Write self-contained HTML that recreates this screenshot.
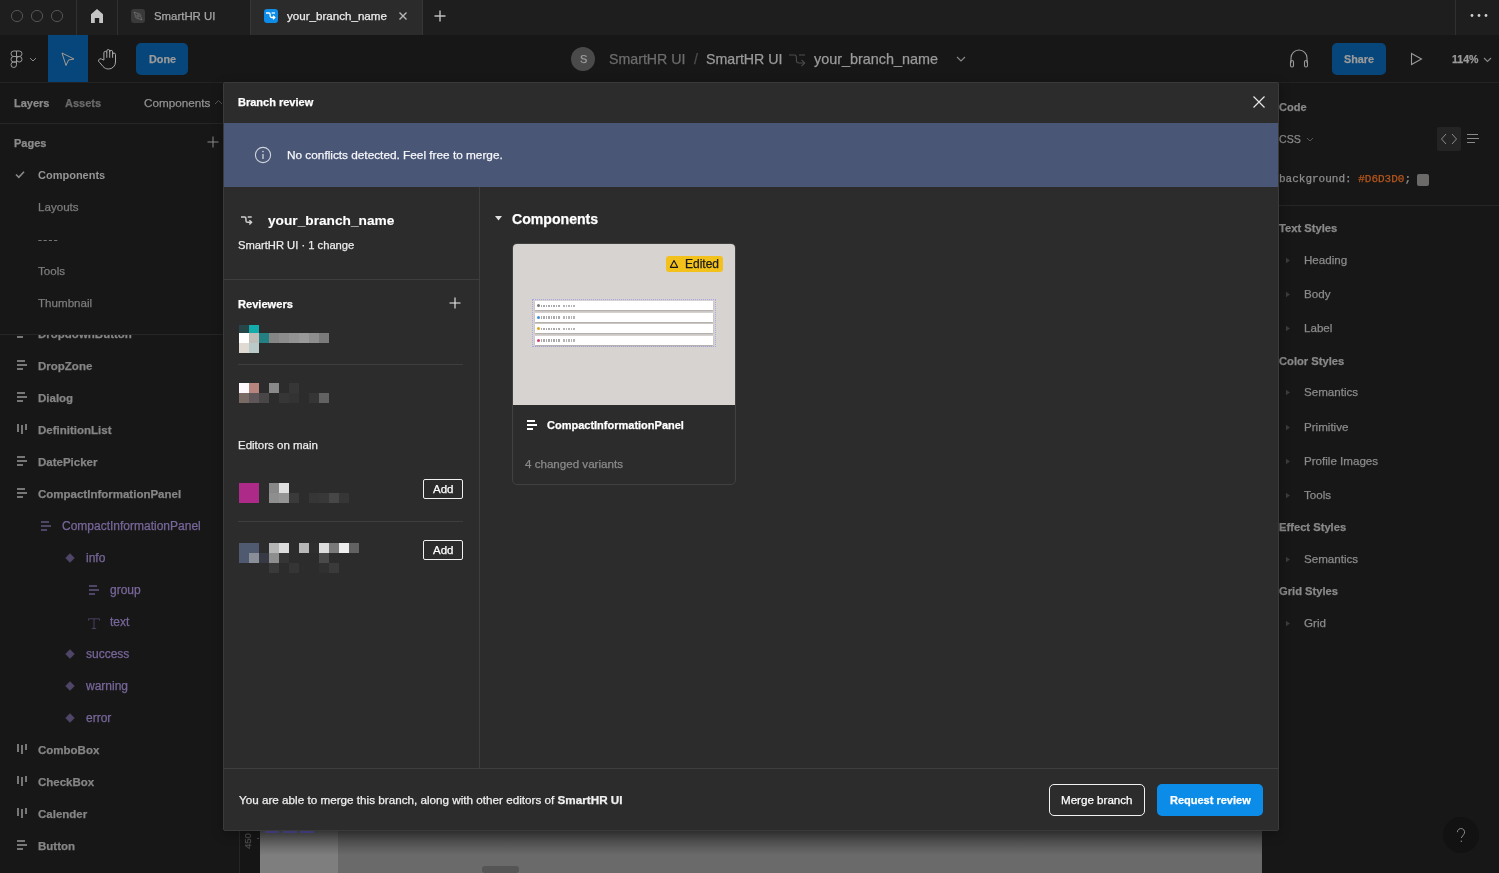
<!DOCTYPE html><html><head><meta charset="utf-8"><style>
html,body{margin:0;padding:0;width:1499px;height:873px;overflow:hidden;background:#171717;font-family:"Liberation Sans",sans-serif}
.t{position:absolute;white-space:nowrap;will-change:transform;-webkit-text-stroke:0.25px currentColor}
.r{position:absolute;display:block}
</style></head><body>

<div class="r" style="left:0px;top:0px;width:1499px;height:35px;background:#1e1e1e;"></div>
<svg class="r" style="left:10px;top:9px;" width="14" height="14" viewBox="0 0 14 14"><circle cx="7" cy="7" r="5.6" fill="none" stroke="#545454" stroke-width="1"/></svg>
<svg class="r" style="left:30px;top:9px;" width="14" height="14" viewBox="0 0 14 14"><circle cx="7" cy="7" r="5.6" fill="none" stroke="#545454" stroke-width="1"/></svg>
<svg class="r" style="left:50px;top:9px;" width="14" height="14" viewBox="0 0 14 14"><circle cx="7" cy="7" r="5.6" fill="none" stroke="#545454" stroke-width="1"/></svg>
<div class="r" style="left:76px;top:0px;width:1px;height:35px;background:#303030;"></div>
<div class="r" style="left:117px;top:0px;width:1px;height:35px;background:#303030;"></div>
<svg class="r" style="left:90px;top:9px;" width="14" height="15" viewBox="0 0 14 15"><path d="M1 5.3 L7 0 L13 5.3 V14 H9.2 V9 H4.8 V14 H1 Z" fill="#c4c4c4"/></svg>
<div class="r" style="left:131px;top:9px;width:14px;height:14px;background:#3a3a3a;border-radius:3px"></div>
<svg class="r" style="left:131px;top:9px;" width="14" height="14" viewBox="0 0 14 14"><g fill="none" stroke="#6e6e6e" stroke-width="0.9"><path d="M3 3 L6.2 4.3 A3 3 0 0 1 9.7 7.8 L11 11 L7.8 9.7 A3 3 0 0 1 4.3 6.2 Z"/><circle cx="7" cy="7" r="1.2"/></g></svg>
<div class="t " style="left:154px;top:9.05px;font-size:11.4px;line-height:14px;font-weight:400;color:#a6a6a6;">SmartHR UI</div>
<div class="r" style="left:250px;top:0px;width:173px;height:35px;background:#2b2b2b;"></div>
<div class="r" style="left:250px;top:0px;width:1px;height:35px;background:#363636;"></div>
<div class="r" style="left:422px;top:0px;width:1px;height:35px;background:#363636;"></div>
<div class="r" style="left:264px;top:9px;width:14px;height:14px;background:#0d8ce9;border-radius:3px"></div>
<svg class="r" style="left:264px;top:10.8px" width="14" height="11" viewBox="0 0 14 11"><g transform="translate(2,2) scale(0.56)" fill="none" stroke="#ffffff" stroke-width="2.32" stroke-linecap="butt"><path d="M0 0 H5.4 Q7.4 0 7.4 2.5 V5.5 Q7.4 8 10 8 H15.6"/><path d="M12.5 4.8 L15.7 8 L12.5 11.2"/><path d="M10 0 H16"/></g></svg>
<div class="t " style="left:287px;top:8.98px;font-size:11.6px;line-height:14px;font-weight:400;color:#ececec;">your_branch_name</div>
<svg class="r" style="left:398px;top:11px;" width="10" height="10" viewBox="0 0 10 10"><path d="M1.5 1.5 L8.5 8.5 M8.5 1.5 L1.5 8.5" stroke="#b8b8b8" stroke-width="1.4"/></svg>
<svg class="r" style="left:434px;top:10px;" width="12" height="12" viewBox="0 0 12 12"><path d="M6 0.5 V11.5 M0.5 6 H11.5" stroke="#c0c0c0" stroke-width="1.4"/></svg>
<div class="r" style="left:1455px;top:0px;width:1px;height:35px;background:#303030;"></div>
<svg class="r" style="left:1470px;top:13px;" width="18" height="5" viewBox="0 0 18 5"><circle cx="2" cy="2.5" r="1.4" fill="#cfcfcf"/><circle cx="9" cy="2.5" r="1.4" fill="#cfcfcf"/><circle cx="16" cy="2.5" r="1.4" fill="#cfcfcf"/></svg>
<div class="r" style="left:0px;top:35px;width:1499px;height:47px;background:#171717;"></div>
<div class="r" style="left:0px;top:82px;width:1499px;height:1px;background:#232323;"></div>
<svg class="r" style="left:10px;top:50px;" width="13" height="19" viewBox="0 0 13 19"><g fill="none" stroke="#9a9a9a" stroke-width="1" transform="translate(1,1)"><path d="M5.5 0 H2.75 A2.75 2.75 0 0 0 2.75 5.5 H5.5 Z"/><path d="M5.5 0 H8.25 A2.75 2.75 0 0 1 8.25 5.5 H5.5 Z"/><path d="M5.5 5.5 H2.75 A2.75 2.75 0 0 0 2.75 11 H5.5 Z"/><circle cx="8.25" cy="8.25" r="2.75"/><path d="M5.5 11 H2.75 A2.75 2.75 0 1 0 5.5 13.75 Z"/></g></svg>
<svg class="r" style="left:29px;top:57px;" width="8" height="5" viewBox="0 0 8 5"><path d="M1 1 L4 4 L7 1" fill="none" stroke="#8a8a8a" stroke-width="1"/></svg>
<div class="r" style="left:48px;top:35px;width:40px;height:47px;background:#07467a;"></div>
<svg class="r" style="left:59px;top:50px;" width="18" height="18" viewBox="0 0 18 18"><path d="M3 3 L15 9 L9.5 10 L7 15.5 Z" fill="none" stroke="#a49c92" stroke-width="1"/></svg>
<svg class="r" style="left:97px;top:46px;" width="24" height="26" viewBox="0 0 24 26"><path d="M6.90 14.00 V6.80 A1.45 1.45 0 0 1 9.80 6.80 V5.00 A1.45 1.45 0 0 1 12.70 5.00 V5.80 A1.45 1.45 0 0 1 15.60 5.80 V8.50 A1.45 1.45 0 0 1 18.50 8.50 V16.00 A7 7 0 0 1 11.50 23.00 C9.00 23.00 7.50 22.00 6.00 20.50 L2.80 16.60 A1.7 1.7 0 0 1 4.30 12.90 L6.90 14.20 M9.80 6.80 V11.80 M12.70 5.00 V11.80 M15.60 5.80 V11.80" fill="none" stroke="#a8a8a8" stroke-width="1"/></svg>
<div class="r" style="left:136px;top:43px;width:52px;height:32px;background:#07467a;border-radius:5px"></div>
<div class="t " style="left:149px;top:52.26px;font-size:10.8px;line-height:14px;font-weight:700;color:#9a9a9a;">Done</div>
<div class="r" style="left:571px;top:47px;width:24px;height:24px;background:#4a4a4a;border-radius:50%"></div>
<div class="t " style="left:579.5px;top:52.19px;font-size:11px;line-height:14px;font-weight:400;color:#9c9c9c;">S</div>
<div class="t " style="left:609px;top:50.08px;font-size:14.2px;line-height:18px;font-weight:400;color:#6c6c6c;">SmartHR UI</div>
<div class="t " style="left:694px;top:50.15px;font-size:14px;line-height:18px;font-weight:400;color:#4e4e4e;">/</div>
<div class="t " style="left:706px;top:50.08px;font-size:14.2px;line-height:18px;font-weight:400;color:#9a9a9a;">SmartHR UI</div>
<svg class="r" style="left:787px;top:52.5px" width="22" height="18" viewBox="0 0 22 18"><g transform="translate(2,2) scale(1.0)" fill="none" stroke="#4c4c4c" stroke-width="1.10" stroke-linecap="butt"><path d="M0 0 H5.4 Q7.4 0 7.4 2.5 V5.5 Q7.4 8 10 8 H15.6"/><path d="M12.5 4.8 L15.7 8 L12.5 11.2"/><path d="M10 0 H16"/></g></svg>
<div class="t " style="left:814px;top:50.01px;font-size:14.4px;line-height:18px;font-weight:400;color:#9a9a9a;">your_branch_name</div>
<svg class="r" style="left:956px;top:56px;" width="10" height="6" viewBox="0 0 10 6"><path d="M1 1 L5 5 L9 1" fill="none" stroke="#8a8a8a" stroke-width="1.1"/></svg>
<svg class="r" style="left:1288px;top:48px;" width="22" height="22" viewBox="0 0 22 22"><g fill="none" stroke="#9a9a9a" stroke-width="1.1"><path d="M3 15 V10 A8 8 0 0 1 19 10 V15"/><rect x="2.5" y="12.5" width="3" height="6.5" rx="1.5"/><rect x="16.5" y="12.5" width="3" height="6.5" rx="1.5"/></g></svg>
<div class="r" style="left:1332px;top:43px;width:54px;height:32px;background:#07467a;border-radius:5px"></div>
<div class="t " style="left:1344px;top:52.26px;font-size:10.8px;line-height:14px;font-weight:700;color:#9a9a9a;">Share</div>
<svg class="r" style="left:1410px;top:52px;" width="13" height="14" viewBox="0 0 13 14"><path d="M1.5 1.5 L11.5 7 L1.5 12.5 Z" fill="none" stroke="#9a9a9a" stroke-width="1.1"/></svg>
<div class="t " style="left:1452px;top:52.83px;font-size:10.6px;line-height:13px;font-weight:700;color:#9a9a9a;">114%</div>
<svg class="r" style="left:1483px;top:57px;" width="9" height="6" viewBox="0 0 9 6"><path d="M1 1 L4.5 4.5 L8 1" fill="none" stroke="#8a8a8a" stroke-width="1.1"/></svg>
<div class="r" style="left:0px;top:83px;width:239px;height:790px;background:#171717;"></div>
<div class="r" style="left:239px;top:83px;width:1px;height:790px;background:#262626;"></div>
<div class="t " style="left:14px;top:96.19px;font-size:11px;line-height:14px;font-weight:700;color:#8b8b8b;">Layers</div>
<div class="t " style="left:65px;top:96.19px;font-size:11px;line-height:14px;font-weight:700;color:#6a6a6a;">Assets</div>
<div class="t " style="left:144px;top:95.45px;font-size:11.7px;line-height:15px;font-weight:400;color:#929292;">Components</div>
<svg class="r" style="left:214px;top:99px;" width="9" height="6" viewBox="0 0 9 6"><path d="M1 5 L4.5 1.5 L8 5" fill="none" stroke="#555" stroke-width="1"/></svg>
<div class="r" style="left:0px;top:123px;width:239px;height:1px;background:#262626;"></div>
<div class="t " style="left:14px;top:136.19px;font-size:11px;line-height:14px;font-weight:700;color:#8b8b8b;">Pages</div>
<svg class="r" style="left:207px;top:136px;" width="12" height="12" viewBox="0 0 12 12"><path d="M6 0.5 V11.5 M0.5 6 H11.5" stroke="#8a8a8a" stroke-width="1"/></svg>
<svg class="r" style="left:15px;top:170px;" width="10" height="9" viewBox="0 0 10 9"><path d="M1 4.5 L3.8 7.3 L9 1.8" fill="none" stroke="#8a8a8a" stroke-width="1.6"/></svg>
<div class="t " style="left:38px;top:168.39px;font-size:11px;line-height:14px;font-weight:700;color:#959595;-webkit-text-stroke:0">Components</div>
<div class="t " style="left:38px;top:200.18px;font-size:11.6px;line-height:14px;font-weight:400;color:#7c7c7c;">Layouts</div>
<div class="t " style="left:38px;top:232.18px;font-size:11.6px;line-height:14px;font-weight:400;color:#7c7c7c;letter-spacing:1.4px">----</div>
<div class="t " style="left:38px;top:264.18px;font-size:11.6px;line-height:14px;font-weight:400;color:#7c7c7c;">Tools</div>
<div class="t " style="left:38px;top:296.18px;font-size:11.6px;line-height:14px;font-weight:400;color:#7c7c7c;">Thumbnail</div>
<div class="r" style="left:0px;top:334px;width:239px;height:1px;background:#262626;"></div>
<div style="position:absolute;left:0;top:335px;width:239px;height:538px;overflow:hidden">
<div class="r" style="left:17px;top:-6.699999999999989px;width:8px;height:2px;background:#777;"></div>
<div class="r" style="left:17px;top:-2.6999999999999886px;width:10px;height:2px;background:#777;"></div>
<div class="r" style="left:17px;top:1.3000000000000114px;width:6px;height:2px;background:#777;"></div>
<div class="t " style="left:38px;top:-8.18px;font-size:11.5px;line-height:14px;font-weight:700;color:#858585;">DropdownButton</div>
<div class="r" style="left:17px;top:25.30000000000001px;width:8px;height:2px;background:#777;"></div>
<div class="r" style="left:17px;top:29.30000000000001px;width:10px;height:2px;background:#777;"></div>
<div class="r" style="left:17px;top:33.30000000000001px;width:6px;height:2px;background:#777;"></div>
<div class="t " style="left:38px;top:23.82px;font-size:11.5px;line-height:14px;font-weight:700;color:#858585;">DropZone</div>
<div class="r" style="left:17px;top:57.30000000000001px;width:8px;height:2px;background:#777;"></div>
<div class="r" style="left:17px;top:61.30000000000001px;width:10px;height:2px;background:#777;"></div>
<div class="r" style="left:17px;top:65.30000000000001px;width:6px;height:2px;background:#777;"></div>
<div class="t " style="left:38px;top:55.82px;font-size:11.5px;line-height:14px;font-weight:700;color:#858585;">Dialog</div>
<div class="r" style="left:17px;top:89.30000000000001px;width:2px;height:8px;background:#777;"></div>
<div class="r" style="left:21px;top:90.30000000000001px;width:2px;height:9px;background:#777;"></div>
<div class="r" style="left:25px;top:89.30000000000001px;width:2px;height:6px;background:#777;"></div>
<div class="t " style="left:38px;top:87.82px;font-size:11.5px;line-height:14px;font-weight:700;color:#858585;">DefinitionList</div>
<div class="r" style="left:17px;top:121.30000000000001px;width:8px;height:2px;background:#777;"></div>
<div class="r" style="left:17px;top:125.30000000000001px;width:10px;height:2px;background:#777;"></div>
<div class="r" style="left:17px;top:129.3px;width:6px;height:2px;background:#777;"></div>
<div class="t " style="left:38px;top:119.82px;font-size:11.5px;line-height:14px;font-weight:700;color:#858585;">DatePicker</div>
<div class="r" style="left:17px;top:153.3px;width:8px;height:2px;background:#777;"></div>
<div class="r" style="left:17px;top:157.3px;width:10px;height:2px;background:#777;"></div>
<div class="r" style="left:17px;top:161.3px;width:6px;height:2px;background:#777;"></div>
<div class="t " style="left:38px;top:151.82px;font-size:11.5px;line-height:14px;font-weight:700;color:#858585;">CompactInformationPanel</div>
<div class="r" style="left:41px;top:186.29999999999995px;width:8px;height:2px;background:#4f4566;"></div>
<div class="r" style="left:41px;top:190.29999999999995px;width:10px;height:2px;background:#4f4566;"></div>
<div class="r" style="left:41px;top:194.29999999999995px;width:6px;height:2px;background:#4f4566;"></div>
<div class="t " style="left:62px;top:184.34px;font-size:12px;line-height:15px;font-weight:400;color:#77679a;">CompactInformationPanel</div>
<svg class="r" style="left:65px;top:218.29999999999995px" width="10" height="10" viewBox="0 0 10 10"><path d="M5 0.3 L9.7 5 L5 9.7 L0.3 5Z" fill="#4f4566"/></svg>
<div class="t " style="left:86px;top:216.34px;font-size:12px;line-height:15px;font-weight:400;color:#77679a;">info</div>
<div class="r" style="left:89px;top:250.29999999999995px;width:8px;height:2px;background:#4f4566;"></div>
<div class="r" style="left:89px;top:254.29999999999995px;width:10px;height:2px;background:#4f4566;"></div>
<div class="r" style="left:89px;top:258.29999999999995px;width:6px;height:2px;background:#4f4566;"></div>
<div class="t " style="left:110px;top:248.34px;font-size:12px;line-height:15px;font-weight:400;color:#77679a;">group</div>
<svg class="r" style="left:88px;top:282.79999999999995px" width="12" height="12" viewBox="0 0 12 12"><path d="M0.5 2.5 V0.8 H11.5 V2.5 M6 0.8 V10.5 M3.8 10.5 H8.2" fill="none" stroke="#4f4566" stroke-width="0.9"/></svg>
<div class="t " style="left:110px;top:280.34px;font-size:12px;line-height:15px;font-weight:400;color:#77679a;">text</div>
<svg class="r" style="left:65px;top:314.29999999999995px" width="10" height="10" viewBox="0 0 10 10"><path d="M5 0.3 L9.7 5 L5 9.7 L0.3 5Z" fill="#4f4566"/></svg>
<div class="t " style="left:86px;top:312.34px;font-size:12px;line-height:15px;font-weight:400;color:#77679a;">success</div>
<svg class="r" style="left:65px;top:346.29999999999995px" width="10" height="10" viewBox="0 0 10 10"><path d="M5 0.3 L9.7 5 L5 9.7 L0.3 5Z" fill="#4f4566"/></svg>
<div class="t " style="left:86px;top:344.34px;font-size:12px;line-height:15px;font-weight:400;color:#77679a;">warning</div>
<svg class="r" style="left:65px;top:378.29999999999995px" width="10" height="10" viewBox="0 0 10 10"><path d="M5 0.3 L9.7 5 L5 9.7 L0.3 5Z" fill="#4f4566"/></svg>
<div class="t " style="left:86px;top:376.34px;font-size:12px;line-height:15px;font-weight:400;color:#77679a;">error</div>
<div class="r" style="left:17px;top:409.29999999999995px;width:2px;height:8px;background:#777;"></div>
<div class="r" style="left:21px;top:410.29999999999995px;width:2px;height:9px;background:#777;"></div>
<div class="r" style="left:25px;top:409.29999999999995px;width:2px;height:6px;background:#777;"></div>
<div class="t " style="left:38px;top:407.82px;font-size:11.5px;line-height:14px;font-weight:700;color:#858585;">ComboBox</div>
<div class="r" style="left:17px;top:441.29999999999995px;width:2px;height:8px;background:#777;"></div>
<div class="r" style="left:21px;top:442.29999999999995px;width:2px;height:9px;background:#777;"></div>
<div class="r" style="left:25px;top:441.29999999999995px;width:2px;height:6px;background:#777;"></div>
<div class="t " style="left:38px;top:439.82px;font-size:11.5px;line-height:14px;font-weight:700;color:#858585;">CheckBox</div>
<div class="r" style="left:17px;top:473.29999999999995px;width:2px;height:8px;background:#777;"></div>
<div class="r" style="left:21px;top:474.29999999999995px;width:2px;height:9px;background:#777;"></div>
<div class="r" style="left:25px;top:473.29999999999995px;width:2px;height:6px;background:#777;"></div>
<div class="t " style="left:38px;top:471.82px;font-size:11.5px;line-height:14px;font-weight:700;color:#858585;">Calender</div>
<div class="r" style="left:17px;top:505.29999999999995px;width:8px;height:2px;background:#777;"></div>
<div class="r" style="left:17px;top:509.29999999999995px;width:10px;height:2px;background:#777;"></div>
<div class="r" style="left:17px;top:513.3px;width:6px;height:2px;background:#777;"></div>
<div class="t " style="left:38px;top:503.82px;font-size:11.5px;line-height:14px;font-weight:700;color:#858585;">Button</div>
</div>
<div class="r" style="left:1262px;top:83px;width:237px;height:790px;background:#171717;"></div>
<div class="t " style="left:1279px;top:100.19px;font-size:11px;line-height:14px;font-weight:700;color:#898989;">Code</div>
<div class="t " style="left:1279px;top:132.83px;font-size:10.6px;line-height:13px;font-weight:400;color:#8a8a8a;">CSS</div>
<svg class="r" style="left:1306px;top:137px;" width="8" height="5" viewBox="0 0 8 5"><path d="M1 1 L4 4 L7 1" fill="none" stroke="#555" stroke-width="1"/></svg>
<div class="r" style="left:1437px;top:127px;width:24px;height:24px;background:#242424;border-radius:2px"></div>
<svg class="r" style="left:1440px;top:132px;" width="18" height="14" viewBox="0 0 18 14"><path d="M6 2 L1.5 7 L6 12 M12 2 L16.5 7 L12 12" fill="none" stroke="#8a8a8a" stroke-width="1"/></svg>
<svg class="r" style="left:1466px;top:133px;" width="14" height="11" viewBox="0 0 14 11"><path d="M1 1.5 H12 M1 5.5 H13 M1 9.5 H9" stroke="#8a8a8a" stroke-width="1"/></svg>
<div class="t " style="left:1279px;top:172.19px;font-size:11px;line-height:14px;font-weight:400;color:#8d8d8d;font-family:'Liberation Mono',monospace">background: <span style="color:#b5561c">#D6D3D0</span>;</div>
<div class="r" style="left:1417px;top:174px;width:12px;height:12px;background:#6c6a68;border-radius:2px"></div>
<div class="r" style="left:1262px;top:205px;width:237px;height:1px;background:#262626;"></div>
<div class="t " style="left:1279px;top:221.42px;font-size:11.2px;line-height:14px;font-weight:700;color:#898989;">Text Styles</div>
<svg class="r" style="left:1285px;top:257px;" width="6" height="7" viewBox="0 0 6 7"><path d="M1 0.8 L5 3.5 L1 6.2Z" fill="#3c3c3c"/></svg>
<div class="t " style="left:1303.8px;top:253.08px;font-size:11.6px;line-height:14px;font-weight:400;color:#8a8a8a;">Heading</div>
<svg class="r" style="left:1285px;top:291px;" width="6" height="7" viewBox="0 0 6 7"><path d="M1 0.8 L5 3.5 L1 6.2Z" fill="#3c3c3c"/></svg>
<div class="t " style="left:1303.8px;top:287.08px;font-size:11.6px;line-height:14px;font-weight:400;color:#8a8a8a;">Body</div>
<svg class="r" style="left:1285px;top:325px;" width="6" height="7" viewBox="0 0 6 7"><path d="M1 0.8 L5 3.5 L1 6.2Z" fill="#3c3c3c"/></svg>
<div class="t " style="left:1303.8px;top:321.08px;font-size:11.6px;line-height:14px;font-weight:400;color:#8a8a8a;">Label</div>
<div class="t " style="left:1279px;top:353.82px;font-size:11.2px;line-height:14px;font-weight:700;color:#898989;">Color Styles</div>
<svg class="r" style="left:1285px;top:389.3px;" width="6" height="7" viewBox="0 0 6 7"><path d="M1 0.8 L5 3.5 L1 6.2Z" fill="#3c3c3c"/></svg>
<div class="t " style="left:1303.8px;top:385.38px;font-size:11.6px;line-height:14px;font-weight:400;color:#8a8a8a;">Semantics</div>
<svg class="r" style="left:1285px;top:423.5px;" width="6" height="7" viewBox="0 0 6 7"><path d="M1 0.8 L5 3.5 L1 6.2Z" fill="#3c3c3c"/></svg>
<div class="t " style="left:1303.8px;top:419.58px;font-size:11.6px;line-height:14px;font-weight:400;color:#8a8a8a;">Primitive</div>
<svg class="r" style="left:1285px;top:457.7px;" width="6" height="7" viewBox="0 0 6 7"><path d="M1 0.8 L5 3.5 L1 6.2Z" fill="#3c3c3c"/></svg>
<div class="t " style="left:1303.8px;top:453.78px;font-size:11.6px;line-height:14px;font-weight:400;color:#8a8a8a;">Profile Images</div>
<svg class="r" style="left:1285px;top:491.7px;" width="6" height="7" viewBox="0 0 6 7"><path d="M1 0.8 L5 3.5 L1 6.2Z" fill="#3c3c3c"/></svg>
<div class="t " style="left:1303.8px;top:487.78px;font-size:11.6px;line-height:14px;font-weight:400;color:#8a8a8a;">Tools</div>
<div class="t " style="left:1279px;top:519.62px;font-size:11.2px;line-height:14px;font-weight:700;color:#898989;">Effect Styles</div>
<svg class="r" style="left:1285px;top:555.5px;" width="6" height="7" viewBox="0 0 6 7"><path d="M1 0.8 L5 3.5 L1 6.2Z" fill="#3c3c3c"/></svg>
<div class="t " style="left:1303.8px;top:551.58px;font-size:11.6px;line-height:14px;font-weight:400;color:#8a8a8a;">Semantics</div>
<div class="t " style="left:1279px;top:583.82px;font-size:11.2px;line-height:14px;font-weight:700;color:#898989;">Grid Styles</div>
<svg class="r" style="left:1285px;top:619.6px;" width="6" height="7" viewBox="0 0 6 7"><path d="M1 0.8 L5 3.5 L1 6.2Z" fill="#3c3c3c"/></svg>
<div class="t " style="left:1303.8px;top:615.68px;font-size:11.6px;line-height:14px;font-weight:400;color:#8a8a8a;">Grid</div>
<div class="r" style="left:240px;top:83px;width:22px;height:790px;background:#151515;"></div>
<div class="r" style="left:260px;top:83px;width:1002px;height:790px;background:#6a6a6a;"></div>
<div class="r" style="left:260px;top:820px;width:78px;height:53px;background:#7e7e7e;"></div>
<div class="r" style="left:482px;top:866px;width:37px;height:7px;background:#555;border-radius:3px"></div>
<div class="r" style="left:260px;top:831px;width:1002px;height:24px;background:linear-gradient(rgba(20,20,20,0.55), rgba(0,0,0,0));"></div>
<div class="t " style="left:242px;top:848.71px;font-size:9.5px;line-height:12px;font-weight:400;color:#4a4a4a;transform:rotate(-90deg);transform-origin:0 0">450</div>
<div class="r" style="left:257px;top:838px;width:2px;height:1px;background:#444;"></div>
<div class="r" style="left:265px;top:831px;width:14px;height:2px;background:#4b4690;"></div>
<div class="r" style="left:283px;top:831px;width:14px;height:2px;background:#4b4690;"></div>
<div class="r" style="left:300px;top:831px;width:14px;height:2px;background:#4b4690;"></div>
<div class="r" style="left:1443px;top:817px;width:36px;height:36px;background:#121212;border-radius:50%"></div>
<svg class="r" style="left:1454px;top:827px;" width="14" height="18" viewBox="0 0 14 18"><path d="M3.4 5.2 A3.6 3.6 0 1 1 9.6 7.6 L7.2 11" fill="none" stroke="#8a8a8a" stroke-width="1"/><circle cx="7.3" cy="14.2" r="0.75" fill="#8a8a8a"/></svg>
<div style="position:absolute;left:223px;top:82px;width:1056px;height:749px;background:#2c2c2c;box-sizing:border-box;border:1px solid #3a3a3a;border-radius:2px;box-shadow:0 3px 12px rgba(0,0,0,0.3)"></div>
<div class="t " style="left:238px;top:94.89px;font-size:11px;line-height:14px;font-weight:700;color:#ffffff;">Branch review</div>
<svg class="r" style="left:1252px;top:95px;" width="14" height="14" viewBox="0 0 14 14"><path d="M1.5 1.5 L12.5 12.5 M12.5 1.5 L1.5 12.5" stroke="#e6e6e6" stroke-width="1.2"/></svg>
<div class="r" style="left:224px;top:123px;width:1054px;height:64px;background:#4a5676;"></div>
<svg class="r" style="left:254px;top:146px;" width="18" height="18" viewBox="0 0 18 18"><circle cx="9" cy="9" r="7.6" fill="none" stroke="#cfd3dc" stroke-width="1.1"/><path d="M9 8 V13" stroke="#cfd3dc" stroke-width="1.3"/><circle cx="9" cy="5.6" r="0.8" fill="#cfd3dc"/></svg>
<div class="t " style="left:286.5px;top:147.61px;font-size:11.8px;line-height:15px;font-weight:400;color:#f6f7fa;">No conflicts detected. Feel free to merge.</div>
<div class="r" style="left:479px;top:187px;width:1px;height:581px;background:#3e3e3e;"></div>
<svg class="r" style="left:239px;top:214.8px" width="16" height="13" viewBox="0 0 16 13"><g transform="translate(2,2) scale(0.67)" fill="none" stroke="#d0d0d0" stroke-width="2.24" stroke-linecap="butt"><path d="M0 0 H5.4 Q7.4 0 7.4 2.5 V5.5 Q7.4 8 10 8 H15.6"/><path d="M12.5 4.8 L15.7 8 L12.5 11.2"/><path d="M10 0 H16"/></g></svg>
<div class="t " style="left:267.5px;top:212.45px;font-size:13.7px;line-height:17px;font-weight:700;color:#ffffff;-webkit-text-stroke:0.1px #fff">your_branch_name</div>
<div class="t " style="left:238.4px;top:238.02px;font-size:11.2px;line-height:14px;font-weight:400;color:#ececec;">SmartHR UI · 1 change</div>
<div class="r" style="left:224px;top:279px;width:255px;height:1px;background:#3e3e3e;"></div>
<div class="t " style="left:238.3px;top:297.35px;font-size:11.1px;line-height:14px;font-weight:700;color:#ffffff;">Reviewers</div>
<svg class="r" style="left:449px;top:297px;" width="12" height="12" viewBox="0 0 12 12"><path d="M6 0.5 V11.5 M0.5 6 H11.5" stroke="#f0f0f0" stroke-width="1.1"/></svg>
<div class="r" style="left:239px;top:325px;width:10px;height:8px;background:#26464a;"></div>
<div class="r" style="left:249px;top:325px;width:10px;height:8px;background:#14abab;"></div>
<div class="r" style="left:239px;top:333px;width:10px;height:10px;background:#ffffff;"></div>
<div class="r" style="left:249px;top:333px;width:10px;height:10px;background:#c1bdb9;"></div>
<div class="r" style="left:259px;top:333px;width:10px;height:10px;background:#237f82;"></div>
<div class="r" style="left:269px;top:333px;width:10px;height:10px;background:#858585;"></div>
<div class="r" style="left:279px;top:333px;width:10px;height:10px;background:#8c8c8c;"></div>
<div class="r" style="left:289px;top:333px;width:10px;height:10px;background:#939393;"></div>
<div class="r" style="left:299px;top:333px;width:10px;height:10px;background:#999999;"></div>
<div class="r" style="left:309px;top:333px;width:10px;height:10px;background:#8d8d8d;"></div>
<div class="r" style="left:319px;top:333px;width:10px;height:10px;background:#7a7a7a;"></div>
<div class="r" style="left:239px;top:343px;width:10px;height:10px;background:#e0dbd2;"></div>
<div class="r" style="left:249px;top:343px;width:10px;height:10px;background:#b9cac9;"></div>
<div class="r" style="left:238px;top:364px;width:225px;height:1px;background:#3e3e3e;"></div>
<div class="r" style="left:239px;top:383px;width:10px;height:10px;background:#fff8fc;"></div>
<div class="r" style="left:249px;top:383px;width:10px;height:10px;background:#b8857e;"></div>
<div class="r" style="left:269px;top:383px;width:10px;height:10px;background:#898989;"></div>
<div class="r" style="left:289px;top:383px;width:10px;height:10px;background:#363636;"></div>
<div class="r" style="left:239px;top:393px;width:10px;height:10px;background:#7a6a64;"></div>
<div class="r" style="left:249px;top:393px;width:10px;height:10px;background:#5e5658;"></div>
<div class="r" style="left:259px;top:393px;width:10px;height:10px;background:#484646;"></div>
<div class="r" style="left:279px;top:393px;width:10px;height:10px;background:#363636;"></div>
<div class="r" style="left:289px;top:393px;width:10px;height:10px;background:#333333;"></div>
<div class="r" style="left:309px;top:393px;width:10px;height:10px;background:#353535;"></div>
<div class="r" style="left:319px;top:393px;width:10px;height:10px;background:#626262;"></div>
<div class="t " style="left:238.3px;top:438.22px;font-size:11.5px;line-height:14px;font-weight:400;color:#ececec;">Editors on main</div>
<div class="r" style="left:239px;top:483px;width:20px;height:20px;background:#ad2a88;"></div>
<div class="r" style="left:269px;top:483px;width:10px;height:10px;background:#888888;"></div>
<div class="r" style="left:279px;top:483px;width:10px;height:10px;background:#e0e0e0;"></div>
<div class="r" style="left:269px;top:493px;width:10px;height:10px;background:#8e8e8e;"></div>
<div class="r" style="left:279px;top:493px;width:10px;height:10px;background:#959595;"></div>
<div class="r" style="left:289px;top:493px;width:10px;height:10px;background:#3a3a3a;"></div>
<div class="r" style="left:309px;top:493px;width:10px;height:10px;background:#363636;"></div>
<div class="r" style="left:319px;top:493px;width:10px;height:10px;background:#383838;"></div>
<div class="r" style="left:329px;top:493px;width:10px;height:10px;background:#474747;"></div>
<div class="r" style="left:339px;top:493px;width:10px;height:10px;background:#363636;"></div>
<div style="position:absolute;left:423px;top:479px;width:40px;height:20px;box-sizing:border-box;border:1px solid #f0f0f0;border-radius:2px"></div>
<div class="t " style="left:433px;top:482.02px;font-size:11.5px;line-height:14px;font-weight:400;color:#ffffff;">Add</div>
<div class="r" style="left:238px;top:521px;width:225px;height:1px;background:#3e3e3e;"></div>
<div class="r" style="left:239px;top:543px;width:10px;height:10px;background:#4f5a70;"></div>
<div class="r" style="left:249px;top:543px;width:10px;height:10px;background:#4f5a70;"></div>
<div class="r" style="left:269px;top:543px;width:10px;height:10px;background:#b5b5b5;"></div>
<div class="r" style="left:279px;top:543px;width:10px;height:10px;background:#dcdcdc;"></div>
<div class="r" style="left:299px;top:543px;width:10px;height:10px;background:#b7b7b7;"></div>
<div class="r" style="left:309px;top:543px;width:10px;height:10px;background:#2e2e2e;"></div>
<div class="r" style="left:319px;top:543px;width:10px;height:10px;background:#dedede;"></div>
<div class="r" style="left:329px;top:543px;width:10px;height:10px;background:#7a7a7a;"></div>
<div class="r" style="left:339px;top:543px;width:10px;height:10px;background:#eeeeee;"></div>
<div class="r" style="left:349px;top:543px;width:10px;height:10px;background:#626262;"></div>
<div class="r" style="left:239px;top:553px;width:10px;height:10px;background:#4f5a70;"></div>
<div class="r" style="left:249px;top:553px;width:10px;height:10px;background:#8a8e98;"></div>
<div class="r" style="left:259px;top:553px;width:10px;height:10px;background:#373a44;"></div>
<div class="r" style="left:269px;top:553px;width:10px;height:10px;background:#8e8e8e;"></div>
<div class="r" style="left:279px;top:553px;width:10px;height:10px;background:#353535;"></div>
<div class="r" style="left:319px;top:553px;width:10px;height:10px;background:#4a4a4a;"></div>
<div class="r" style="left:269px;top:563px;width:10px;height:10px;background:#3a3a3a;"></div>
<div class="r" style="left:289px;top:563px;width:10px;height:10px;background:#353535;"></div>
<div class="r" style="left:319px;top:563px;width:10px;height:10px;background:#303030;"></div>
<div class="r" style="left:329px;top:563px;width:10px;height:10px;background:#3a3a3a;"></div>
<div style="position:absolute;left:423px;top:540px;width:40px;height:20px;box-sizing:border-box;border:1px solid #f0f0f0;border-radius:2px"></div>
<div class="t " style="left:433px;top:543.02px;font-size:11.5px;line-height:14px;font-weight:400;color:#ffffff;">Add</div>
<svg class="r" style="left:494px;top:215px;" width="9" height="7" viewBox="0 0 9 7"><path d="M1 1 H8 L4.5 5.5Z" fill="#e0e0e0"/></svg>
<div class="t " style="left:512px;top:210.01px;font-size:14.1px;line-height:18px;font-weight:700;color:#ffffff;">Components</div>
<div style="position:absolute;left:512px;top:243px;width:224px;height:242px;box-sizing:border-box;border:1px solid #414141;border-radius:5px;overflow:hidden">
<div style="position:absolute;left:0;top:0;width:222px;height:161px;background:#d7d3d0"></div>
</div>
<div class="r" style="left:666px;top:256px;width:57px;height:16px;background:#f3c11b;border-radius:3px"></div>
<svg class="r" style="left:669px;top:258px;" width="12" height="12" viewBox="0 0 12 12"><path d="M5 2.6 L8.6 9.3 H1.4 Z" fill="none" stroke="#161616" stroke-width="1.15" stroke-linejoin="round"/></svg>
<div class="t " style="left:685px;top:256.84px;font-size:12px;line-height:15px;font-weight:400;color:#1a1a1a;">Edited</div>
<div style="position:absolute;left:532px;top:299px;width:184px;height:48px;box-sizing:border-box;border:1px dotted #ada6e4"></div>
<div style="position:absolute;left:535px;top:301.0px;width:178px;height:9px;background:#fff;box-shadow:0 1px 1.5px rgba(0,0,0,0.22)"></div>
<div class="r" style="left:536.5px;top:304.0px;width:3px;height:3px;background:#777;border-radius:50%"></div>
<div style="position:absolute;left:541px;top:304.5px;width:19px;height:2.5px;background:repeating-linear-gradient(90deg,#aaa 0 1.5px,transparent 1.5px 2.5px)"></div>
<div style="position:absolute;left:563px;top:304.5px;width:12px;height:2.5px;background:repeating-linear-gradient(90deg,#b5b5b5 0 1.5px,transparent 1.5px 2.5px)"></div>
<div style="position:absolute;left:535px;top:312.5px;width:178px;height:9px;background:#fff;box-shadow:0 1px 1.5px rgba(0,0,0,0.22)"></div>
<div class="r" style="left:536.5px;top:315.5px;width:3px;height:3px;background:#3a8fd6;border-radius:50%"></div>
<div style="position:absolute;left:541px;top:316.0px;width:19px;height:2.5px;background:repeating-linear-gradient(90deg,#aaa 0 1.5px,transparent 1.5px 2.5px)"></div>
<div style="position:absolute;left:563px;top:316.0px;width:12px;height:2.5px;background:repeating-linear-gradient(90deg,#b5b5b5 0 1.5px,transparent 1.5px 2.5px)"></div>
<div style="position:absolute;left:535px;top:324.0px;width:178px;height:9px;background:#fff;box-shadow:0 1px 1.5px rgba(0,0,0,0.22)"></div>
<div class="r" style="left:536.5px;top:327.0px;width:3px;height:3px;background:#e0a21a;border-radius:50%"></div>
<div style="position:absolute;left:541px;top:327.5px;width:19px;height:2.5px;background:repeating-linear-gradient(90deg,#aaa 0 1.5px,transparent 1.5px 2.5px)"></div>
<div style="position:absolute;left:563px;top:327.5px;width:12px;height:2.5px;background:repeating-linear-gradient(90deg,#b5b5b5 0 1.5px,transparent 1.5px 2.5px)"></div>
<div style="position:absolute;left:535px;top:335.5px;width:178px;height:9px;background:#fff;box-shadow:0 1px 1.5px rgba(0,0,0,0.22)"></div>
<div class="r" style="left:536.5px;top:338.5px;width:3px;height:3px;background:#d43d6a;border-radius:50%"></div>
<div style="position:absolute;left:541px;top:339.0px;width:19px;height:2.5px;background:repeating-linear-gradient(90deg,#aaa 0 1.5px,transparent 1.5px 2.5px)"></div>
<div style="position:absolute;left:563px;top:339.0px;width:12px;height:2.5px;background:repeating-linear-gradient(90deg,#b5b5b5 0 1.5px,transparent 1.5px 2.5px)"></div>
<div class="r" style="left:527px;top:420px;width:8px;height:2px;background:#ffffff;"></div>
<div class="r" style="left:527px;top:424px;width:10px;height:2px;background:#ffffff;"></div>
<div class="r" style="left:527px;top:428px;width:6px;height:2px;background:#ffffff;"></div>
<div class="t " style="left:547px;top:418.19px;font-size:11px;line-height:14px;font-weight:700;color:#ffffff;">CompactInformationPanel</div>
<div class="t " style="left:525px;top:457.28px;font-size:11.6px;line-height:14px;font-weight:400;color:#8a8a8a;">4 changed variants</div>
<div class="r" style="left:224px;top:768px;width:1054px;height:1px;background:#3e3e3e;"></div>
<div class="t " style="left:239px;top:792.25px;font-size:11.7px;line-height:15px;font-weight:400;color:#f0f0f0;">You are able to merge this branch, along with other editors of <b>SmartHR UI</b></div>
<div style="position:absolute;left:1049px;top:784px;width:96px;height:32px;box-sizing:border-box;border:1px solid #f2f2f2;border-radius:5px"></div>
<div class="t " style="left:1061.3px;top:792.98px;font-size:11.6px;line-height:14px;font-weight:400;color:#ffffff;">Merge branch</div>
<div class="r" style="left:1157px;top:784px;width:106px;height:32px;background:#0c8ce9;border-radius:5px"></div>
<div class="t " style="left:1169.8px;top:793.19px;font-size:11px;line-height:14px;font-weight:700;color:#ffffff;">Request review</div>
</body></html>
